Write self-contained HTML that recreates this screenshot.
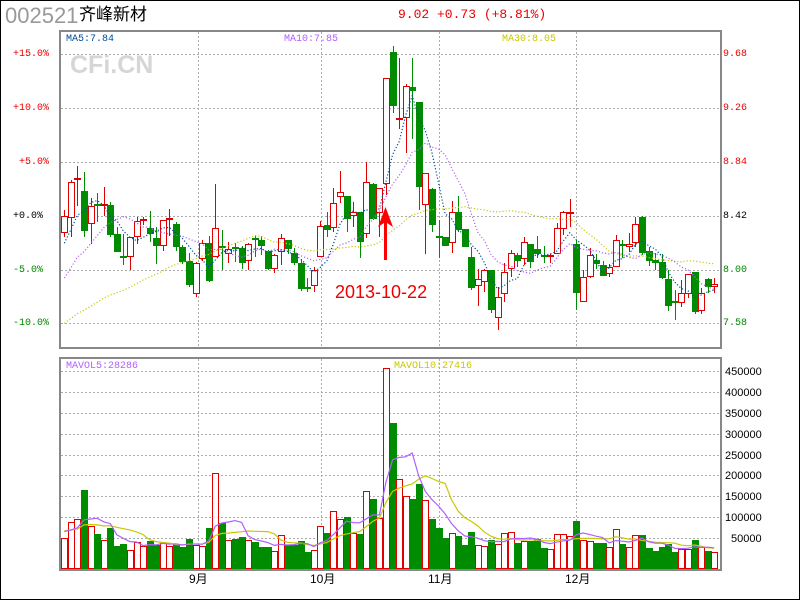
<!DOCTYPE html>
<html><head><meta charset="utf-8"><style>
html,body{margin:0;padding:0;background:#fff;}
#w{position:relative;width:798px;height:598px;border:1px solid #000;overflow:hidden;background:#fff;}
.t{position:absolute;white-space:nowrap;font-family:"Liberation Mono",monospace;font-size:10px;line-height:10px;}
svg rect,svg line{shape-rendering:crispEdges;}
</style></head><body><div id="w">
<div class="t" style="left:4px;top:4px;font-family:'Liberation Sans',sans-serif;font-size:22px;line-height:22px;color:#999;">002521</div>
<div class="t" style="left:78px;top:4px;font-family:'Liberation Sans','Noto Sans CJK SC',sans-serif;font-size:17px;line-height:20px;color:#000;">齐峰新材</div>
<div class="t" style="left:397px;top:7px;font-size:13px;line-height:14px;color:#e00;">9.02 +0.73 (+8.81%)</div>
<div class="t" style="left:65px;top:34px;color:#004c99;">MA5:7.84</div>
<div class="t" style="left:283px;top:34px;color:#b060ff;">MA10:7.85</div>
<div class="t" style="left:501px;top:34px;color:#c8c800;">MA30:8.05</div>
<div class="t" style="left:69px;top:51px;font-family:'Liberation Sans',sans-serif;font-weight:bold;font-size:25px;line-height:26px;color:#d6d6d6;">CFi.CN</div>
<div class="t" style="left:12px;top:49px;color:#e00;">+15.0%</div>
<div class="t" style="left:12px;top:103px;color:#e00;">+10.0%</div>
<div class="t" style="left:18px;top:157px;color:#e00;">+5.0%</div>
<div class="t" style="left:12px;top:211px;color:#000;">+0.0%</div>
<div class="t" style="left:12px;top:265px;color:#080;">-5.0%</div>
<div class="t" style="left:12px;top:318px;color:#080;">-10.0%</div>
<div class="t" style="left:722px;top:49px;color:#e00;">9.68</div>
<div class="t" style="left:722px;top:103px;color:#e00;">9.26</div>
<div class="t" style="left:722px;top:157px;color:#e00;">8.84</div>
<div class="t" style="left:722px;top:211px;color:#000;">8.42</div>
<div class="t" style="left:722px;top:265px;color:#080;">8.00</div>
<div class="t" style="left:722px;top:318px;color:#080;">7.58</div>
<div class="t" style="left:65px;top:361px;color:#b060ff;">MAVOL5:28286</div>
<div class="t" style="left:393px;top:361px;color:#c8c800;">MAVOL10:27416</div>
<div id="vl"></div>
<div class="t" style="left:334px;top:281px;font-family:'Liberation Sans',sans-serif;font-size:18px;line-height:20px;color:#e00;">2013-10-22</div>
<div class="t" style="left:188px;top:571px;font-family:'Liberation Sans','Noto Sans CJK SC',sans-serif;font-size:12px;line-height:14px;">9月</div>
<div class="t" style="left:309px;top:571px;font-family:'Liberation Sans','Noto Sans CJK SC',sans-serif;font-size:12px;line-height:14px;">10月</div>
<div class="t" style="left:427px;top:571px;font-family:'Liberation Sans','Noto Sans CJK SC',sans-serif;font-size:12px;line-height:14px;">11月</div>
<div class="t" style="left:564px;top:571px;font-family:'Liberation Sans','Noto Sans CJK SC',sans-serif;font-size:12px;line-height:14px;">12月</div>
<svg id="s" width="800" height="600" style="position:absolute;left:-1px;top:-1px;" xmlns="http://www.w3.org/2000/svg"></svg>
</div>
<script>
var C=[
['r',216,233,210,237],['r',182,218,180,237],['r',178,180,166,206],['g',191,231,172,237],['r',206,224,198,244],
['g',204,206,193,222],['r',204,205,187,216],['g',205,235,202,237],['g',234,252,227,252],['g',256,258,234,265],
['r',237,257,237,270],['r',221,237,217,244],['r',219,221,217,225],['g',228,234,211,242],['g',238,246,227,264],
['r',220,246,220,251],['r',218,220,209,236],['g',224,247,222,251],['g',247,262,245,264],['g',261,285,253,287],
['r',263,294,262,297],['r',243,259,240,261],['g',243,281,236,282],['r',228,257,184,257],['g',246,248,230,270],
['r',249,254,242,263],['g',247,249,243,262],['g',248,263,246,269],['r',244,261,243,270],['g',238,240,235,257],
['g',240,246,236,255],['g',251,269,250,270],['r',255,269,254,273],['r',238,252,234,265],['g',240,249,240,254],
['g',253,263,248,265],['g',263,289,259,291],['g',287,289,278,292],['r',270,286,267,292],['r',226,257,221,257],
['g',225,230,212,237],['r',203,228,188,232],['r',192,197,171,203],['g',196,219,196,232],['r',212,216,202,227],
['g',212,242,212,258],['r',182,234,162,238],['g',184,219,183,220],['r',188,213,188,237],['r',78,184,78,195],
['g',52,106,46,113],['r',118,120,58,129],['r',86,118,84,153],['g',87,91,58,139],['g',102,187,102,210],
['r',173,205,173,254],['g',189,225,188,232],['g',236,238,220,258],['g',237,246,237,246],['r',212,243,201,253],
['g',212,230,196,232],['g',229,247,229,247],['g',257,288,247,290],['r',279,286,269,306],['r',270,282,269,292],
['g',270,310,270,313],['r',297,318,287,330],['r',272,294,263,302],['r',253,269,250,277],['g',255,261,253,267],
['r',242,259,237,265],['g',244,262,244,268],['g',249,254,236,258],['g',255,257,246,263],['r',255,257,254,263],
['r',228,254,223,254],['r',212,229,211,235],['r',212,214,199,227],['g',244,293,240,310],['r',277,302,270,302],
['r',255,277,248,278],['g',260,264,254,269],['g',265,276,261,276],['r',267,274,264,277],['r',240,267,235,267],
['g',244,246,240,258],['r',244,247,233,252],['r',224,243,217,247],['g',217,253,216,255],['g',251,261,247,266],
['g',260,263,253,270],['g',262,278,254,279],['g',279,306,270,311],['g',301,303,290,320],['r',293,303,280,307],
['r',274,294,274,298],['g',272,312,272,314],['r',293,311,288,314],['g',279,287,278,293],['r',284,287,278,293]];
var V=[538,522,519,490,526,534,540,528,546,544,550,542,546,541,545,543,546,544,547,539,545,546,528,473,523,540,539,537,540,542,547,547,551,535,545,545,541,552,550,526,533,511,519,517,533,534,491,499,518,368,423,479,496,499,484,500,519,528,538,533,536,545,532,545,546,540,544,533,532,543,541,541,539,548,549,534,534,536,521,540,541,543,543,547,529,544,547,535,535,548,551,547,544,552,549,549,540,547,551,552];
var s='',R='#e00000',G='#008c00';
function X(i){return 64.3+6.565*i;}
var gy=[54,108,162,216,270,323];
gy.forEach(function(y){s+='<line x1="61" x2="720" y1="'+y+'.5" y2="'+y+'.5" stroke="#aaa" stroke-dasharray="2,2"/>';});
for(var k=0;k<9;k++){var y=Math.round(370.7+20.95*k);s+='<line x1="61" x2="720" y1="'+y+'.5" y2="'+y+'.5" stroke="#aaa" stroke-dasharray="2,2"/>';}
[198,321,439,576].forEach(function(x){s+='<line x1="'+x+'.5" x2="'+x+'.5" y1="32" y2="347" stroke="#aaa" stroke-dasharray="2,2"/><line x1="'+x+'.5" x2="'+x+'.5" y1="359" y2="569" stroke="#aaa" stroke-dasharray="2,2"/>';});
var cl=[];
C.forEach(function(c,i){var xi=Math.round(X(i)),xc=xi+0.5,col=c[0]=='r'?R:G;
 cl.push(c[0]=='r'?c[1]:c[2]);
 s+='<rect x="'+xi+'" y="'+c[3]+'" width="1" height="'+(c[4]-c[3])+'" fill="'+col+'"/>';
 var h=c[2]-c[1];
 if(c[0]=='r'){ if(h<3){s+='<rect x="'+(xi-3)+'" y="'+c[1]+'" width="7" height="2" fill="'+R+'"/>';} else s+='<rect x="'+(xi-2.5)+'" y="'+(c[1]+0.5)+'" width="6" height="'+(h-1)+'" fill="#fff" stroke="'+R+'" stroke-width="1"/>';}
 else s+='<rect x="'+(xi-3)+'" y="'+c[1]+'" width="7" height="'+Math.max(h,1)+'" fill="'+G+'"/>';
 var vt=V[i];
 if(c[0]=='r') s+='<rect x="'+(xi-2.5)+'" y="'+(vt+0.5)+'" width="6" height="'+(569-vt-1)+'" fill="#fff" stroke="'+R+'" stroke-width="1"/>';
 else s+='<rect x="'+(xi-3)+'" y="'+vt+'" width="7" height="'+(569-vt)+'" fill="'+G+'"/>';
});
function ma(a,n,f){var o=[];for(var i=0;i<a.length;i++){var t=0;for(var j=i-n+1;j<=i;j++)t+=(j<0?f:a[j]);o.push(t/n);}return o;}
function pl(a,col,dash){var p='';a.forEach(function(y,i){p+=(i?' L':'M')+X(i).toFixed(1)+' '+y.toFixed(1);});
 return '<path d="'+p+'" fill="none" stroke="'+col+'" stroke-width="1.2" '+(dash?'stroke-dasharray="1.2,2"':'')+'/>';}
s+=pl(ma(cl,30,327),'#c8c800',1);
s+=pl(ma(cl,10,285),'#b060ff',1);
s+=pl(ma(cl,5,250),'#004c99',1);
s+=pl(ma(V,10,530),'#c8c800',0);
s+=pl(ma(V,5,530),'#b060ff',0);
s+='<rect x="384" y="222" width="3" height="38" fill="#f00"/><path d="M385.5 207 L378 227 L385.5 222 L393 227 Z" fill="#f00"/>';
s+='<rect x="60" y="31" width="661" height="317" fill="none" stroke="#888" stroke-width="2" style="shape-rendering:auto"/>';
s+='<rect x="60" y="358" width="661" height="212" fill="none" stroke="#888" stroke-width="2" style="shape-rendering:auto"/>';
document.getElementById('s').innerHTML=s;
var vl='',vals=['450000','400000','350000','300000','250000','200000','150000','100000','50000'];
vals.forEach(function(v,k){var y=Math.round(370.7+20.95*k)-6;vl+='<div class="t" style="left:'+(v.length==6?724:730)+'px;top:'+y+'px;font-family:\'Liberation Sans\',sans-serif;font-size:11px;line-height:12px;color:#000;">'+v+'</div>';});
document.getElementById('vl').innerHTML=vl;
</script>
</body></html>
